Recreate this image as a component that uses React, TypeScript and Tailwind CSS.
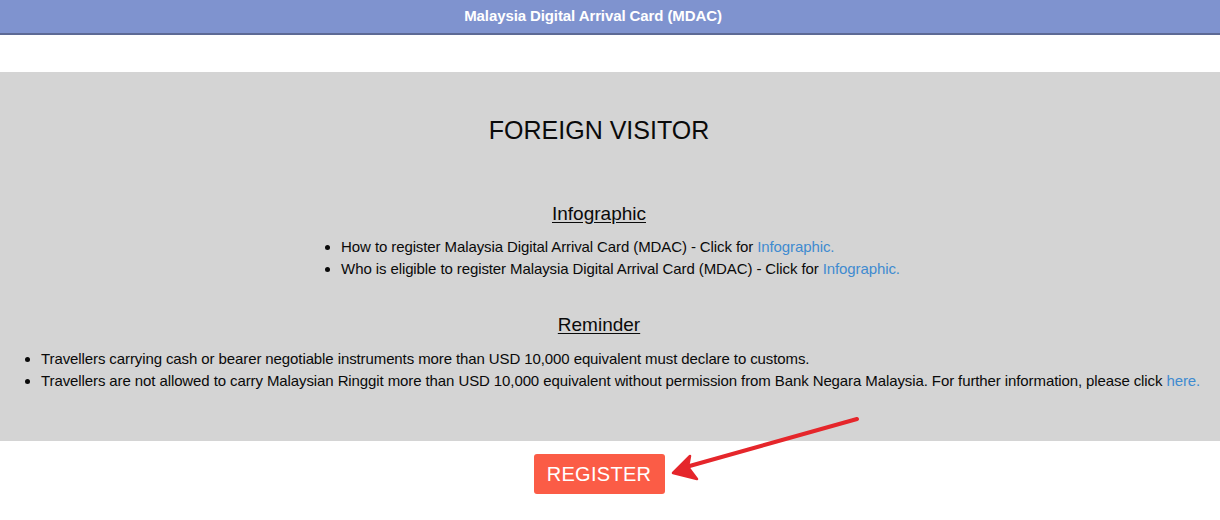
import React from 'react';

const infoItems = [
  'How to register Malaysia Digital Arrival Card (MDAC) - Click for ',
  'Who is eligible to register Malaysia Digital Arrival Card (MDAC) - Click for ',
];

const App: React.FC = () => {
  return (
    <div className="relative min-h-[520px] bg-white text-[#0a0a0a] font-['Liberation_Sans',Arial,sans-serif]">
      {/* header */}
      <header className="h-[35px] bg-[#7f93cf] border-b-2 border-[#5d6a95] flex items-center justify-center">
        <span className="text-white font-bold text-[15px] tracking-[-0.1px] pr-[34px]">
          Malaysia Digital Arrival Card (MDAC)
        </span>
      </header>

      <main className="pt-[37px]">
        <section className="bg-[#d4d4d4] h-[369px] pt-[43px] px-[9px]">
          <h1 className="text-center text-[25px] leading-[30px] pr-[22px]">FOREIGN VISITOR</h1>

          <div className="mt-[58px] flex flex-col items-center pr-[22px]">
            <h2 className="text-[19px] leading-[22px] underline underline-offset-2">Infographic</h2>
            <ul className="mt-[11px] list-disc pl-[43px] text-[15px] tracking-[-0.1px] leading-[22px]">
              {infoItems.map((item) => (
                <li key={item}>
                  {item}
                  <a className="text-[#3f8bd0]" href="#">Infographic.</a>
                </li>
              ))}
            </ul>
          </div>

          <h2 className="mt-[34px] text-center text-[19px] leading-[22px] underline underline-offset-2 pr-[22px]">Reminder</h2>
          <ul className="mt-[12px] list-disc pl-[32px] text-[15px] tracking-[-0.1px] leading-[22px]">
            <li>Travellers carrying cash or bearer negotiable instruments more than USD 10,000 equivalent must declare to customs.</li>
            <li>
              Travellers are not allowed to carry Malaysian Ringgit more than USD 10,000 equivalent without permission from Bank Negara Malaysia. For further information, please click{' '}
              <a className="text-[#3f8bd0]" href="#">here.</a>
            </li>
          </ul>
        </section>

        <div className="flex justify-center pt-[13px] pr-[22px]">
          <button className="w-[131px] h-[40px] rounded-[3px] bg-[#fb5c46] text-white text-[20px] tracking-[0.3px]">
            REGISTER
          </button>
        </div>
      </main>

      {/* annotation arrow */}
      <svg className="absolute left-0 top-0 pointer-events-none" width="1220" height="520" viewBox="0 0 1220 520">
        <path d="M857 419 L686 467" stroke="#e5262b" strokeWidth="4" strokeLinecap="round" fill="none" />
        <path d="M673 473 L690 456 L688 467 L697 479 Z" fill="#e5262b" stroke="#e5262b" strokeWidth="2.5" strokeLinejoin="round" />
      </svg>
    </div>
  );
};

export default App;
